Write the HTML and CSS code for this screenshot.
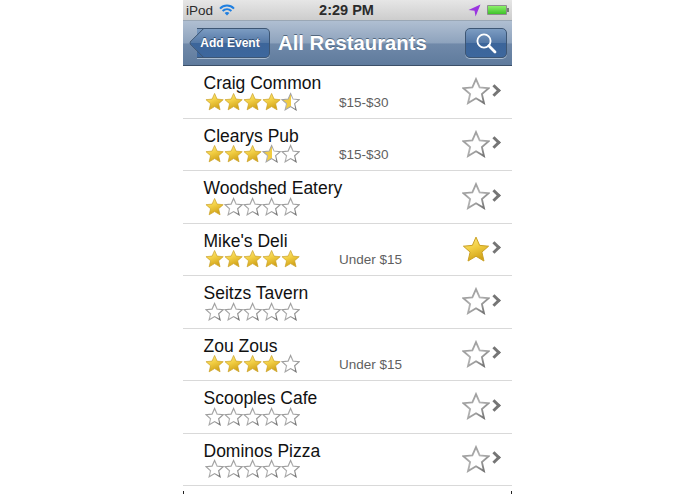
FILE: index.html
```html
<!DOCTYPE html>
<html lang="en">
<head>
<meta charset="UTF-8" />
<title>All Restaurants</title>
<link rel="stylesheet" href="styles.css">
</head>
<body>

<svg class="defs" width="0" height="0">
  <defs>
    <linearGradient id="gold" x1="0" y1="0" x2="0.4" y2="1">
      <stop offset="0" stop-color="#fbeb8e" />
      <stop offset="0.5" stop-color="#f3d045" />
      <stop offset="1" stop-color="#d2a41a" />
    </linearGradient>
    <linearGradient id="halfGold" x1="0" y1="0" x2="1" y2="0">
      <stop offset="0.5" stop-color="#f1cc42" />
      <stop offset="0.5" stop-color="#fff" />
    </linearGradient>
    <linearGradient id="rim" x1="0" y1="0" x2="1" y2="1">
      <stop offset="0" stop-color="#8a8a8a" />
      <stop offset="0.5" stop-color="#b4b4b4" />
      <stop offset="1" stop-color="#666" />
    </linearGradient>
    <path id="starShape" d="M10 1.5 12.6 7.4 19 8 14.2 12.2 15.7 18.6 10 15.2 4.3 18.6 5.8 12.2 1 8 7.4 7.4Z" />
    <symbol id="full" viewBox="0 0 20 20">
      <use href="#starShape" fill="url(#gold)" stroke="#c99f22" stroke-width="0.7" />
    </symbol>
    <symbol id="half" viewBox="0 0 20 20">
      <use href="#starShape" fill="url(#halfGold)" stroke="url(#rim)" stroke-width="1.1" />
    </symbol>
    <symbol id="empty" viewBox="0 0 20 20">
      <use href="#starShape" fill="#fff" stroke="url(#rim)" stroke-width="1.2" />
    </symbol>
    <symbol id="favEmpty" viewBox="0 0 20 20">
      <use href="#starShape" fill="#fff" stroke="url(#rim)" stroke-width="1.3" />
    </symbol>
  </defs>
</svg>

<div class="phone">
  <div class="statusbar">
    <div class="status-left">
      <span>iPod</span>
      <svg class="wifi" viewBox="0 0 16 12" width="16" height="12">
        <path d="M1 4.6C5 .6 11 .6 15 4.6" fill="none" stroke="#1f7fe0" stroke-width="2" />
        <path d="M3.6 7C6.2 4.6 9.8 4.6 12.4 7" fill="none" stroke="#1f7fe0" stroke-width="2" />
        <path d="M8 11.6 5.6 9C7 7.8 9 7.8 10.4 9Z" fill="#1f7fe0" />
      </svg>
    </div>
    <div class="status-time">2:29 PM</div>
    <div class="status-right">
      <svg class="arrow" viewBox="0 0 12 12" width="13" height="13">
        <path d="M11.5 .5 .5 5.6 6 6.2 7 11.5Z" fill="#9a35e0" />
      </svg>
      <div class="battery"><div class="battery-fill"></div></div>
    </div>
  </div>

  <nav class="navbar">
    <a class="back-btn"><span class="back-tip"></span><span class="back-label">Add Event</span></a>
    <div class="nav-title">All Restaurants</div>
    <a class="search-btn">
      <svg viewBox="0 0 24 24" width="24" height="24">
        <circle cx="10" cy="10" r="6.6" fill="none" stroke="#fff" stroke-width="1.8" />
        <path d="M14.8 14.8 21 21" stroke="#fff" stroke-width="2.8" stroke-linecap="round" />
      </svg>
    </a>
  </nav>

  <ul class="list">
    <li class="row">
      <div class="info">
        <div class="name">Craig Common</div>
        <div class="meta">
          <div class="stars">
            <svg><use href="#full" /></svg><svg><use href="#full" /></svg><svg><use href="#full" /></svg><svg><use href="#full" /></svg><svg><use href="#half" /></svg>
          </div>
          <span class="price">$15-$30</span>
        </div>
      </div>
      <svg class="fav"><use href="#favEmpty" /></svg>
      <span class="chevron"></span>
    </li>
    <li class="row">
      <div class="info">
        <div class="name">Clearys Pub</div>
        <div class="meta">
          <div class="stars">
            <svg><use href="#full" /></svg><svg><use href="#full" /></svg><svg><use href="#full" /></svg><svg><use href="#half" /></svg><svg><use href="#empty" /></svg>
          </div>
          <span class="price">$15-$30</span>
        </div>
      </div>
      <svg class="fav"><use href="#favEmpty" /></svg>
      <span class="chevron"></span>
    </li>
    <li class="row">
      <div class="info">
        <div class="name">Woodshed Eatery</div>
        <div class="meta">
          <div class="stars">
            <svg><use href="#full" /></svg><svg><use href="#empty" /></svg><svg><use href="#empty" /></svg><svg><use href="#empty" /></svg><svg><use href="#empty" /></svg>
          </div>
        </div>
      </div>
      <svg class="fav"><use href="#favEmpty" /></svg>
      <span class="chevron"></span>
    </li>
    <li class="row">
      <div class="info">
        <div class="name">Mike's Deli</div>
        <div class="meta">
          <div class="stars">
            <svg><use href="#full" /></svg><svg><use href="#full" /></svg><svg><use href="#full" /></svg><svg><use href="#full" /></svg><svg><use href="#full" /></svg>
          </div>
          <span class="price">Under $15</span>
        </div>
      </div>
      <svg class="fav"><use href="#full" /></svg>
      <span class="chevron"></span>
    </li>
    <li class="row">
      <div class="info">
        <div class="name">Seitzs Tavern</div>
        <div class="meta">
          <div class="stars">
            <svg><use href="#empty" /></svg><svg><use href="#empty" /></svg><svg><use href="#empty" /></svg><svg><use href="#empty" /></svg><svg><use href="#empty" /></svg>
          </div>
        </div>
      </div>
      <svg class="fav"><use href="#favEmpty" /></svg>
      <span class="chevron"></span>
    </li>
    <li class="row">
      <div class="info">
        <div class="name">Zou Zous</div>
        <div class="meta">
          <div class="stars">
            <svg><use href="#full" /></svg><svg><use href="#full" /></svg><svg><use href="#full" /></svg><svg><use href="#full" /></svg><svg><use href="#empty" /></svg>
          </div>
          <span class="price">Under $15</span>
        </div>
      </div>
      <svg class="fav"><use href="#favEmpty" /></svg>
      <span class="chevron"></span>
    </li>
    <li class="row">
      <div class="info">
        <div class="name">Scooples Cafe</div>
        <div class="meta">
          <div class="stars">
            <svg><use href="#empty" /></svg><svg><use href="#empty" /></svg><svg><use href="#empty" /></svg><svg><use href="#empty" /></svg><svg><use href="#empty" /></svg>
          </div>
        </div>
      </div>
      <svg class="fav"><use href="#favEmpty" /></svg>
      <span class="chevron"></span>
    </li>
    <li class="row">
      <div class="info">
        <div class="name">Dominos Pizza</div>
        <div class="meta">
          <div class="stars">
            <svg><use href="#empty" /></svg><svg><use href="#empty" /></svg><svg><use href="#empty" /></svg><svg><use href="#empty" /></svg><svg><use href="#empty" /></svg>
          </div>
        </div>
      </div>
      <svg class="fav"><use href="#favEmpty" /></svg>
      <span class="chevron"></span>
    </li>
  </ul>
  <span class="tick tick-left"></span>
  <span class="tick tick-right"></span>
</div>

</body>
</html>
```

FILE: styles.css
```css
html, body {
  margin: 0;
  padding: 0;
  background-color: #fff;
}
body {
  height: 494px;
  overflow: hidden;
  font-family: "Liberation Sans", Arial, sans-serif;
}
.defs {
  position: absolute;
}
.phone {
  position: relative;
  width: 329px;
  height: 494px;
  margin-left: 183px;
  overflow: hidden;
}

.statusbar {
  display: flex;
  align-items: center;
  justify-content: space-between;
  height: 20px;
  padding: 0 5px 0 3px;
  box-sizing: border-box;
  background: linear-gradient(#e6e6e6, #cdcdcd);
  color: #2b2b2b;
  font-size: 13.5px;
}
.status-left {
  display: flex;
  align-items: center;
  gap: 6px;
}
.status-time {
  font-size: 14.5px;
  font-weight: bold;
  margin-right: 10px;
}
.status-right {
  display: flex;
  align-items: center;
  gap: 6px;
}
.battery {
  position: relative;
  width: 18px;
  height: 8px;
  padding: 1px;
  background-color: #8d8d8d;
  border-radius: 1px;
}
.battery::after {
  content: "";
  position: absolute;
  right: -2px;
  top: 3px;
  width: 2px;
  height: 4px;
  background-color: #777;
}
.battery-fill {
  height: 100%;
  background: linear-gradient(#8cf06a, #3fc22a);
}

.navbar {
  display: flex;
  align-items: center;
  height: 46px;
  padding: 0 5px;
  box-sizing: border-box;
  background: linear-gradient(#b0bfd2, #8ea3bd 50%, #7089a9 52%, #5f7b9d);
  border-top: 1px solid #9aa7b5;
  border-bottom: 1px solid #3b4f68;
}
.back-btn {
  position: relative;
  display: block;
  height: 30px;
  width: 73px;
  margin-left: 9px;
  box-sizing: border-box;
  background: linear-gradient(#7c9cc2, #5478a6 50%, #3c659a 50%, #3d679d);
  border: 1px solid #3d5674;
  border-left: none;
  border-radius: 0 5px 5px 0;
  box-shadow: 0 1px 0 #a9bbcf;
  text-align: center;
}
.back-tip {
  position: absolute;
  left: -5px;
  top: 3px;
  width: 21px;
  height: 21px;
  background: linear-gradient(135deg, #7c9cc2, #5478a6 50%, #3c659a 50%, #3d679d);
  border-left: 1px solid #3d5674;
  border-bottom: 1px solid #3d5674;
  border-radius: 0 0 0 4px;
  transform: rotate(45deg) scale(0.95);
}
.back-label {
  position: relative;
  padding-right: 6px;
  line-height: 28px;
  font-size: 12px;
  font-weight: bold;
  color: #fff;
  text-shadow: 0 -1px 0 #2e4a6c;
}
.nav-title {
  flex: 1;
  margin-left: 8px;
  font-size: 20.3px;
  font-weight: bold;
  color: #fff;
  text-shadow: 0 -1px 0 #53687f;
  white-space: nowrap;
}
.search-btn {
  display: flex;
  align-items: center;
  justify-content: center;
  width: 42px;
  height: 30px;
  box-sizing: border-box;
  background: linear-gradient(#7c9cc2, #5478a6 50%, #3c659a 50%, #3d679d);
  border: 1px solid #3d5674;
  border-radius: 5px;
  box-shadow: 0 1px 0 #a9bbcf;
}

.list {
  list-style: none;
  margin: 0;
  padding: 0;
}
.row {
  display: flex;
  align-items: center;
  height: 52.5px;
  box-sizing: border-box;
  padding: 0 13px 0 20.5px;
  background-color: #fff;
  border-bottom: 1px solid #d9d9d9;
}
.info {
  flex: 1;
}
.name {
  font-size: 17.5px;
  line-height: 22px;
  color: #111;
}
.meta {
  display: flex;
  align-items: center;
  height: 20px;
  margin-top: -3px;
}
.stars {
  display: flex;
  width: 134.5px;
  margin-left: 1px;
}
.stars svg {
  display: block;
  width: 19.2px;
  height: 19.2px;
}
.price {
  margin-top: 2px;
  font-size: 13.5px;
  color: #5f5f5f;
}
.fav {
  width: 28px;
  height: 28px;
  margin-top: -1px;
}
.chevron {
  display: block;
  width: 6px;
  height: 6px;
  margin: -3px 0 0 0;
  border-top: 3px solid #757575;
  border-right: 3px solid #757575;
  transform: rotate(45deg);
}
.tick {
  position: absolute;
  top: 491px;
  width: 1px;
  height: 3px;
  background-color: #222;
}
.tick-left {
  left: 0;
}
.tick-right {
  right: 0;
}
```
